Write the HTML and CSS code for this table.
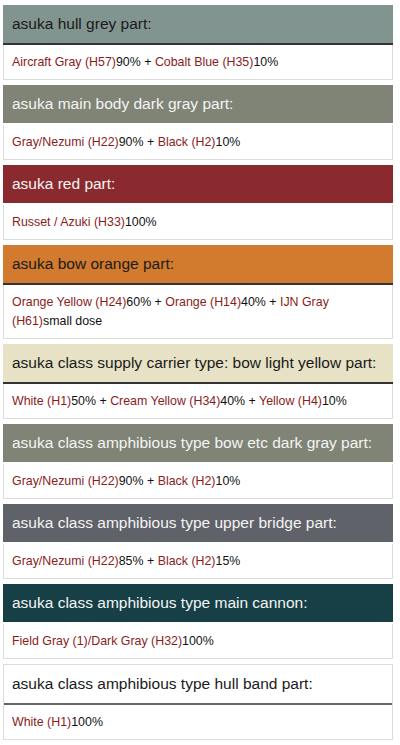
FILE: index.html
```html
<!DOCTYPE html>
<html>
<head>
<meta charset="utf-8">
<link rel="stylesheet" href="styles.css">
</head>
<body>
<div class="list">
  <div class="card">
    <div class="head h-hull">asuka hull grey part:</div>
    <div class="body"><span class="c">Aircraft Gray (H57)</span>90% + <span class="c">Cobalt Blue (H35)</span>10%</div>
  </div>
  <div class="card">
    <div class="head h-dark light">asuka main body dark gray part:</div>
    <div class="body"><span class="c">Gray/Nezumi (H22)</span>90% + <span class="c">Black (H2)</span>10%</div>
  </div>
  <div class="card">
    <div class="head h-red light">asuka red part:</div>
    <div class="body"><span class="c">Russet / Azuki (H33)</span>100%</div>
  </div>
  <div class="card">
    <div class="head h-orange">asuka bow orange part:</div>
    <div class="body"><span class="c">Orange Yellow (H24)</span>60% + <span class="c">Orange (H14)</span>40% + <span class="c">IJN Gray </span><span class="c">(H61)</span>small dose</div>
  </div>
  <div class="card">
    <div class="head h-yellow">asuka class supply carrier type: bow light yellow part:</div>
    <div class="body"><span class="c">White (H1)</span>50% + <span class="c">Cream Yellow (H34)</span>40% + <span class="c">Yellow (H4)</span>10%</div>
  </div>
  <div class="card">
    <div class="head h-dark light">asuka class amphibious type bow etc dark gray part:</div>
    <div class="body"><span class="c">Gray/Nezumi (H22)</span>90% + <span class="c">Black (H2)</span>10%</div>
  </div>
  <div class="card">
    <div class="head h-slate light">asuka class amphibious type upper bridge part:</div>
    <div class="body"><span class="c">Gray/Nezumi (H22)</span>85% + <span class="c">Black (H2)</span>15%</div>
  </div>
  <div class="card">
    <div class="head h-teal light">asuka class amphibious type main cannon:</div>
    <div class="body"><span class="c">Field Gray (1)/Dark Gray (H32)</span>100%</div>
  </div>
  <div class="card">
    <div class="head h-white">asuka class amphibious type hull band part:</div>
    <div class="body"><span class="c">White (H1)</span>100%</div>
  </div>
</div>
</body>
</html>
```

FILE: styles.css
```css
html, body {
  margin: 0;
  padding: 0;
  background: #fff;
}
body {
  font-family: "Liberation Sans", Arial, sans-serif;
  color: #111;
}
.list {
  display: flex;
  flex-direction: column;
  gap: 5px;
  padding: 5px 0 5px 3px;
  width: 390px;
}
.card {
  border: 1px solid #dcdcdc;
  background: #fff;
}
.head {
  font-size: 15.5px;
  line-height: 18px;
  padding: 10px 8px 10px 9px;
  color: #1a1a1a;
  border-bottom: 2px solid #333;
  margin: -1px -1px 0;
  white-space: nowrap;
}
.head.light {
  color: #f4f4f4;
  border-bottom-color: #fff;
}
.h-hull { background: #82948f; }
.h-dark { background: #7f8476; }
.h-red { background: #8a2a2f; }
.h-orange { background: #d27a2d; }
.h-yellow { background: #e7e2c5; }
.h-slate { background: #5f6269; }
.h-teal { background: #163f46; }
.h-white { background: #fff; border-bottom-color: #666; margin: 0; padding-left: 8px; }
.body {
  font-size: 12.4px;
  line-height: 19px;
  padding: 8px 8px 7px;
  color: #111;
}
.c {
  color: #8b1c1c;
}
```
